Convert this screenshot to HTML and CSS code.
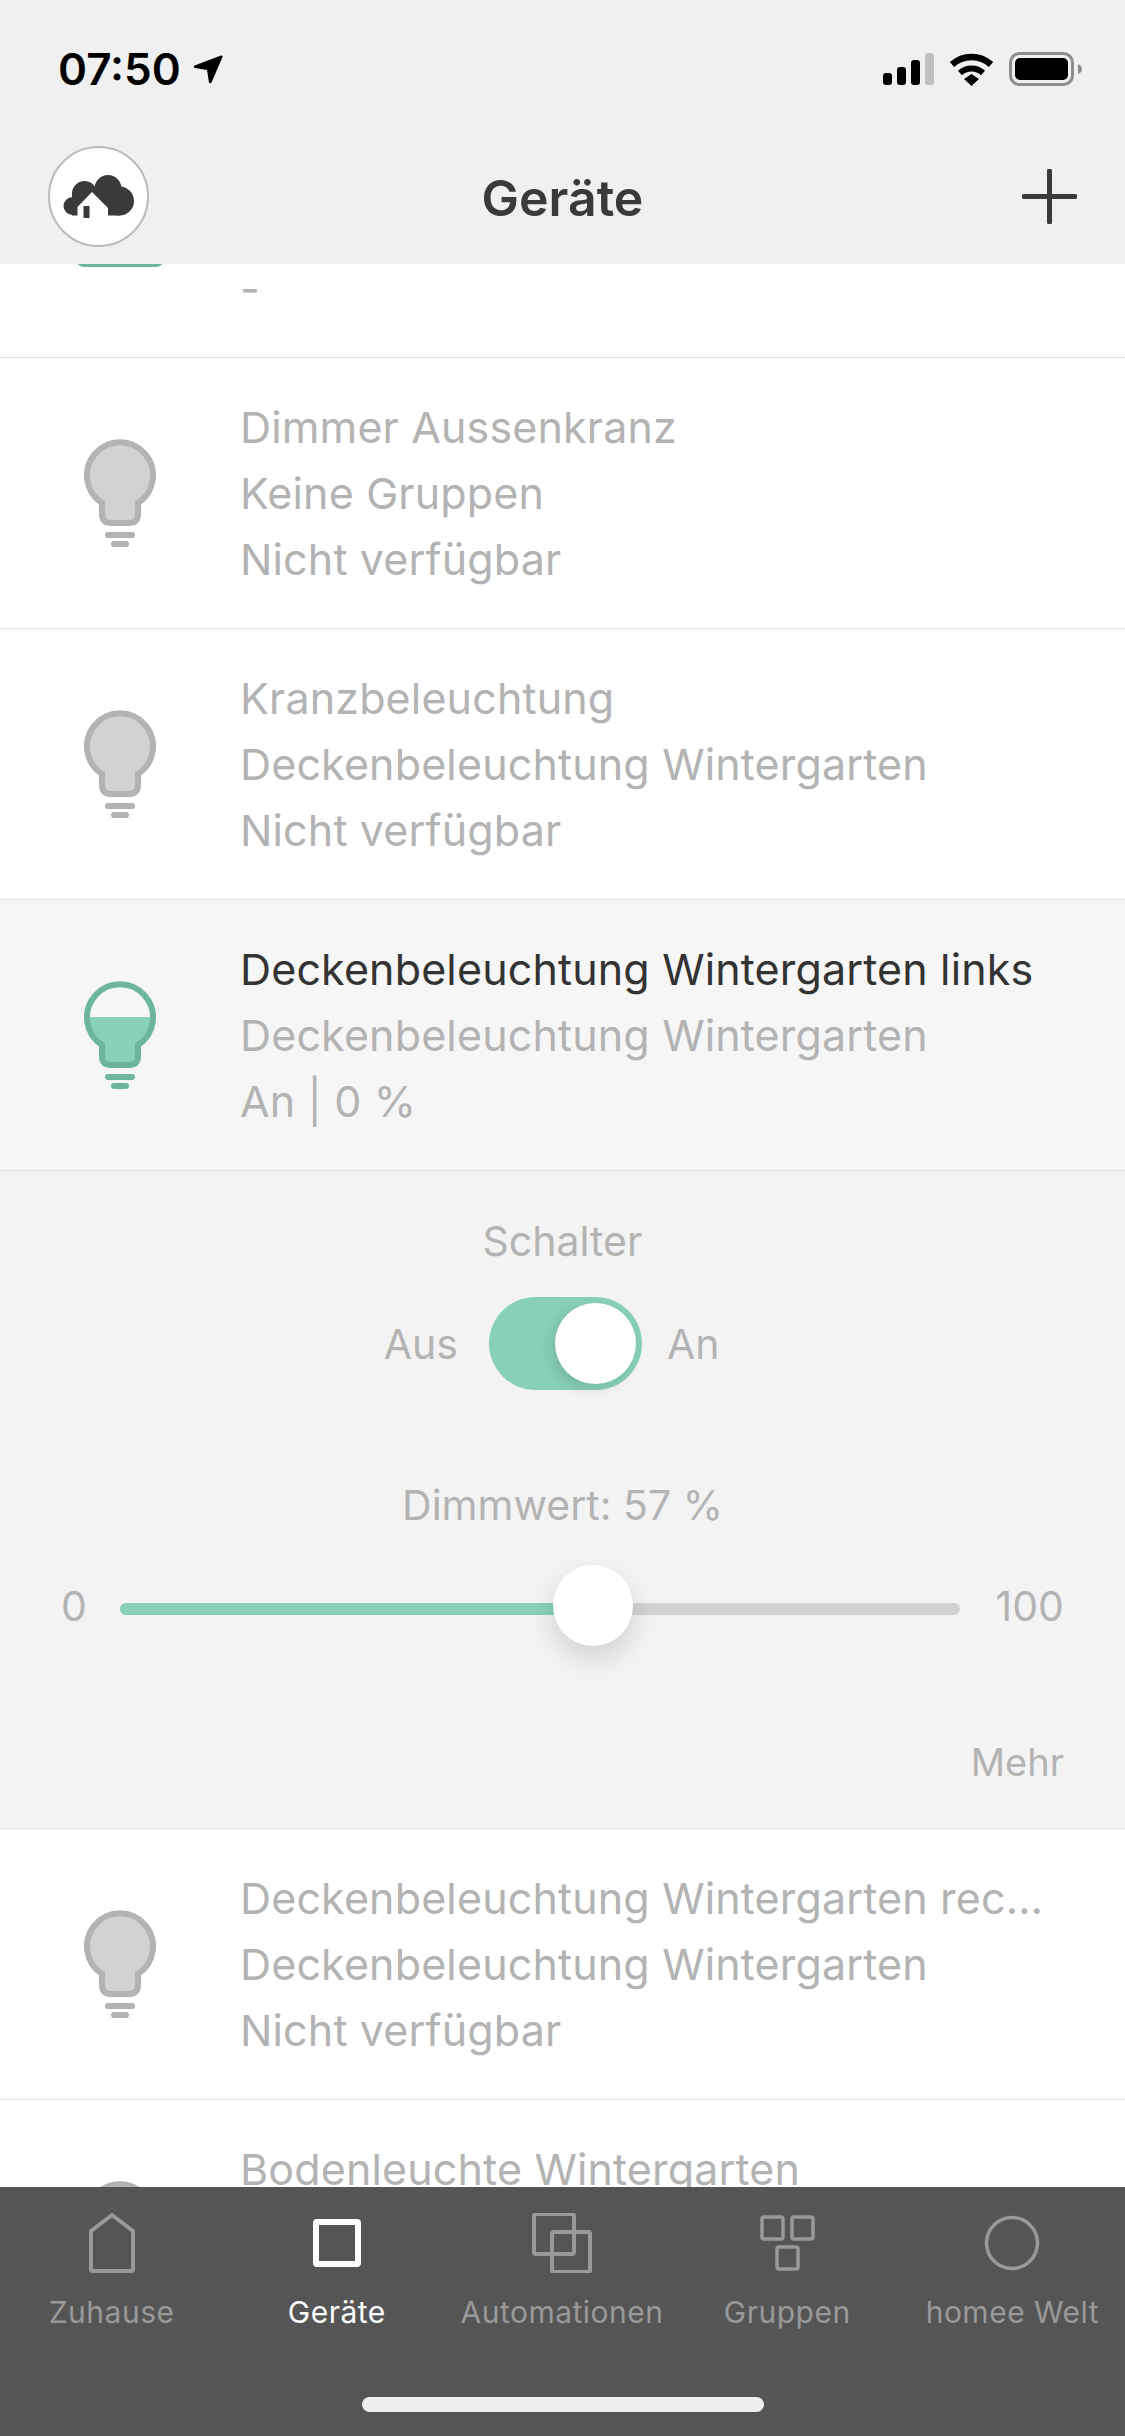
FILE: index.html
```html
<!DOCTYPE html>
<html lang="de">
<head>
    <meta charset="UTF-8">
    <meta name="viewport" content="width=device-width, initial-scale=1.0">
    <title>Geräte</title>
    <link rel="stylesheet" href="styles.css">
</head>
<body>
    <svg class="icon-defs" aria-hidden="true">
        <symbol id="bulb" viewBox="0 0 72 108">
            <path d="M18 64A33 33 0 1 1 54 64V75Q54 84 45 84H27Q18 84 18 75Z" fill="#d2d2d2" stroke="#b3b3b3" stroke-width="6"/>
            <rect x="21" y="93" width="30" height="6" rx="3" fill="#b3b3b3"/>
            <rect x="27" y="102" width="18" height="6" rx="3" fill="#b3b3b3"/>
        </symbol>
    </svg>

    <div class="app">
        <header class="top">
            <div class="status-bar">
                <div class="status-time">
                    <span>07:50</span>
                    <svg class="status-arrow" viewBox="0 0 30 30"><path d="M28 1.5L1.5 11.5Q0 13.5 2 14L14 16L16 28.500Q17 30 18.500 28.500L29.500 3Q30 1 28 1.500Z" fill="#000"/></svg>
                </div>
                <div class="status-icons">
                    <svg class="status-signal" viewBox="0 0 51 32">
                        <rect x="0" y="20" width="9" height="12" rx="3" fill="#000"/>
                        <rect x="14" y="14" width="9" height="18" rx="3" fill="#000"/>
                        <rect x="28" y="7" width="9" height="25" rx="3" fill="#000"/>
                        <rect x="42" y="0" width="9" height="32" rx="3" fill="#c0c0c0"/>
                    </svg>
                    <svg class="status-wifi" viewBox="0 0 45 33">
                        <path d="M3 11.500A29 29 0 0 1 42 11.500" fill="none" stroke="#000" stroke-width="6.500"/>
                        <path d="M11 20A17 17 0 0 1 34 20" fill="none" stroke="#000" stroke-width="6"/>
                        <path d="M15 26L22.500 21L30 26L22.500 33Z" fill="#000"/>
                    </svg>
                    <svg class="status-battery" viewBox="0 0 73 34">
                        <rect x="1.500" y="1.500" width="62" height="31" rx="9" fill="none" stroke="#8e8e8e" stroke-width="3"/>
                        <rect x="6" y="6" width="53" height="22" rx="5" fill="#000"/>
                        <path d="M69 12Q73 13.500 73 17Q73 20.500 69 22Z" fill="#8e8e8e"/>
                    </svg>
                </div>
            </div>
            <div class="nav-bar">
                <div class="nav-logo">
                    <svg class="nav-cloud" viewBox="0 0 72 44">
                        <g fill="#3a3a3a">
                            <circle cx="9.500" cy="31" r="9"/>
                            <circle cx="21.500" cy="18.500" r="12.500"/>
                            <circle cx="45" cy="13.500" r="13.500"/>
                            <circle cx="56.500" cy="26" r="14.500"/>
                            <rect x="9" y="18" width="48" height="22.500"/>
                        </g>
                        <path d="M29 17L14.500 32V44H45V33Z" fill="#fff"/>
                        <rect x="20.500" y="31" width="6" height="12" fill="#3a3a3a"/>
                    </svg>
                </div>
                <div class="nav-title">Geräte</div>
                <svg class="nav-plus" viewBox="0 0 55 55"><path d="M27.500 2V53M2 27.500H53" stroke="#3a3a3a" stroke-width="5" stroke-linecap="round"/></svg>
            </div>
        </header>

        <main class="content">
            <div class="device-list">
                <div class="device-row">
                    <div class="device-icon"><div class="device-bar"></div></div>
                    <div class="device-text">
                        <div class="device-line"></div>
                        <div class="device-line"></div>
                        <div class="device-line">-</div>
                    </div>
                </div>
                <div class="device-row">
                    <div class="device-icon"><svg class="bulb"><use href="#bulb"/></svg></div>
                    <div class="device-text">
                        <div class="device-line">Dimmer Aussenkranz</div>
                        <div class="device-line">Keine Gruppen</div>
                        <div class="device-line">Nicht verfügbar</div>
                    </div>
                </div>
                <div class="device-row">
                    <div class="device-icon"><svg class="bulb"><use href="#bulb"/></svg></div>
                    <div class="device-text">
                        <div class="device-line">Kranzbeleuchtung</div>
                        <div class="device-line">Deckenbeleuchtung Wintergarten</div>
                        <div class="device-line">Nicht verfügbar</div>
                    </div>
                </div>
                <div class="device-row device-row-active">
                    <div class="device-icon">
                        <svg class="bulb" viewBox="0 0 72 108">
                            <path d="M3 36H69A33 33 0 0 1 54 64V75Q54 84 45 84H27Q18 84 18 75V64A33 33 0 0 1 3 36Z" fill="#88d0ba"/>
                            <path d="M18 64A33 33 0 1 1 54 64V75Q54 84 45 84H27Q18 84 18 75Z" fill="none" stroke="#6eb5a0" stroke-width="6"/>
                            <rect x="21" y="93" width="30" height="6" rx="3" fill="#6eb5a0"/>
                            <rect x="27" y="102" width="18" height="6" rx="3" fill="#6eb5a0"/>
                        </svg>
                    </div>
                    <div class="device-text">
                        <div class="device-line device-name">Deckenbeleuchtung Wintergarten links</div>
                        <div class="device-line">Deckenbeleuchtung Wintergarten</div>
                        <div class="device-line">An | 0 %</div>
                    </div>
                </div>

                <div class="device-panel">
                    <div class="panel-label">Schalter</div>
                    <div class="switch-row">
                        <span class="switch-off">Aus</span>
                        <div class="switch"><div class="switch-knob"></div></div>
                        <span class="switch-on">An</span>
                    </div>
                    <div class="panel-label dim-label">Dimmwert: 57 %</div>
                    <div class="slider-row">
                        <span>0</span>
                        <div class="slider">
                            <div class="slider-rail"><div class="slider-fill"></div></div>
                            <div class="slider-thumb"></div>
                        </div>
                        <span class="slider-max">100</span>
                    </div>
                    <div class="panel-more">Mehr</div>
                </div>

                <div class="device-row">
                    <div class="device-icon"><svg class="bulb"><use href="#bulb"/></svg></div>
                    <div class="device-text">
                        <div class="device-line">Deckenbeleuchtung Wintergarten rechts</div>
                        <div class="device-line">Deckenbeleuchtung Wintergarten</div>
                        <div class="device-line">Nicht verfügbar</div>
                    </div>
                </div>
                <div class="device-row">
                    <div class="device-icon"><svg class="bulb"><use href="#bulb"/></svg></div>
                    <div class="device-text">
                        <div class="device-line">Bodenleuchte Wintergarten</div>
                        <div class="device-line"></div>
                        <div class="device-line"></div>
                    </div>
                </div>
            </div>
        </main>

        <nav class="tab-bar">
            <div class="tabs">
                <div class="tab">
                    <svg class="tab-icon" viewBox="0 0 60 60"><path d="M11 58H49Q51 58 51 56V18L30 2L9 18V56Q9 58 11 58Z" fill="none" stroke="#999" stroke-width="4" stroke-linejoin="round"/></svg>
                    <span>Zuhause</span>
                </div>
                <div class="tab tab-active">
                    <svg class="tab-icon" viewBox="0 0 60 60"><rect x="9" y="9" width="42" height="42" rx="1" fill="none" stroke="#fff" stroke-width="6"/></svg>
                    <span>Geräte</span>
                </div>
                <div class="tab">
                    <svg class="tab-icon" viewBox="0 0 60 60">
                        <rect x="2" y="1" width="40" height="40" rx="2" fill="none" stroke="#999" stroke-width="4"/>
                        <rect x="20" y="19" width="38" height="40" rx="2" fill="none" stroke="#999" stroke-width="4"/>
                    </svg>
                    <span>Automationen</span>
                </div>
                <div class="tab">
                    <svg class="tab-icon" viewBox="0 0 60 60">
                        <rect x="5" y="4" width="21" height="22" rx="2" fill="none" stroke="#999" stroke-width="3.500"/>
                        <rect x="35" y="4" width="21" height="22" rx="2" fill="none" stroke="#999" stroke-width="3.500"/>
                        <rect x="20" y="34" width="21" height="22" rx="2" fill="none" stroke="#999" stroke-width="3.500"/>
                    </svg>
                    <span>Gruppen</span>
                </div>
                <div class="tab">
                    <svg class="tab-icon" viewBox="0 0 60 60"><circle cx="30" cy="30" r="25.500" fill="none" stroke="#999" stroke-width="3.500"/></svg>
                    <span>homee Welt</span>
                </div>
            </div>
            <div class="home-indicator"></div>
        </nav>
    </div>
</body>
</html>
```

FILE: styles.css
```css
* {
    box-sizing: border-box;
}
body {
    margin: 0;
    font-family: Inter, "Noto Sans", sans-serif;
    background-color: #fff;
}
.icon-defs {
    display: none;
}
.app {
    width: 1125px;
    height: 2436px;
    display: flex;
    flex-direction: column;
    overflow: hidden;
}

/* header */
.top {
    height: 264px;
    flex: none;
    background-color: #f0f0f0;
    position: relative;
    z-index: 1;
}
.status-bar {
    height: 138px;
    display: flex;
    align-items: center;
    justify-content: space-between;
    padding: 0 43px 0 58px;
}
.status-time {
    display: flex;
    align-items: center;
    gap: 12px;
    font-size: 44px;
    font-weight: 600;
    color: #000;
}
.status-arrow {
    width: 30px;
    height: 30px;
}
.status-icons {
    display: flex;
    align-items: center;
    gap: 15px;
}
.status-signal {
    width: 51px;
    height: 32px;
}
.status-wifi {
    width: 45px;
    height: 33px;
}
.status-battery {
    width: 73px;
    height: 34px;
}
.nav-bar {
    height: 126px;
    display: grid;
    grid-template-columns: 1fr auto 1fr;
    align-items: center;
    padding: 0 48px 9px;
}
.nav-logo {
    width: 101px;
    height: 101px;
    border: 2px solid #bbb;
    border-radius: 50%;
    background-color: #fff;
    display: flex;
    align-items: center;
    justify-content: center;
}
.nav-cloud {
    width: 72px;
    height: 44px;
}
.nav-title {
    font-size: 50px;
    font-weight: 600;
    color: #3a3a3a;
    padding-top: 3px;
}
.nav-plus {
    width: 55px;
    height: 55px;
    justify-self: end;
}

/* list */
.content {
    flex: 1;
    min-height: 0;
    overflow: hidden;
}
.device-list {
    margin-top: -177px;
}
.device-row {
    height: 271px;
    display: flex;
    align-items: center;
    gap: 84px;
    padding: 0 77px 0 84px;
    border-bottom: 1px solid #e0e0e0;
    background-color: #fff;
}
.device-row-active {
    background-color: #f6f6f6;
}
.device-icon {
    width: 72px;
    flex: none;
    display: flex;
    justify-content: center;
}
.bulb {
    width: 72px;
    height: 108px;
    display: block;
}
.device-bar {
    width: 88px;
    height: 90px;
    flex: none;
    background-color: #6eb5a0;
    border-radius: 0 0 8px 8px;
}
.device-text {
    flex: 1;
    min-width: 0;
}
.device-line {
    height: 66px;
    line-height: 66px;
    font-size: 43px;
    letter-spacing: 0.15px;
    color: #b3b3b3;
    white-space: nowrap;
    overflow: hidden;
    text-overflow: ellipsis;
}
.device-name {
    color: #333;
}

/* expanded panel */
.device-panel {
    background-color: #f3f3f3;
    border-bottom: 1px solid #e0e0e0;
    padding: 40px 0 36px;
    font-size: 41px;
    color: #b3b3b3;
}
.panel-label {
    line-height: 60px;
    text-align: center;
}
.switch-row {
    margin-top: 26px;
    display: grid;
    grid-template-columns: 458px 184px 1fr;
    align-items: center;
}
.switch-off {
    text-align: right;
}
.switch-row .switch {
    margin-left: 31px;
}
.switch-on {
    padding-left: 25px;
}
.switch {
    width: 153px;
    height: 93px;
    border-radius: 47px;
    background-color: #88d0ba;
    padding: 6px;
    display: flex;
    justify-content: flex-end;
}
.switch-knob {
    width: 81px;
    height: 81px;
    border-radius: 50%;
    background-color: #fff;
    box-shadow: -4px 5px 14px rgba(0, 0, 0, 0.12);
}
.dim-label {
    margin-top: 85px;
}
.slider-row {
    margin-top: 30px;
    display: grid;
    grid-template-columns: 59px 840px 104px;
    align-items: center;
    padding: 0 61px;
}
.slider {
    height: 81px;
    position: relative;
    padding-top: 38px;
}
.slider-rail {
    height: 12px;
    border-radius: 6px;
    background-color: #d2d2d2;
    overflow: hidden;
}
.slider-fill {
    width: 57%;
    height: 100%;
    background-color: #88d0ba;
}
.slider-thumb {
    position: absolute;
    top: 0;
    left: calc((100% - 80px) * 0.57);
    width: 80px;
    height: 81px;
    border-radius: 50%;
    background-color: #fff;
    box-shadow: 0 12px 28px rgba(0, 0, 0, 0.14);
}
.slider-max {
    text-align: right;
}
.panel-more {
    margin-top: 86px;
    line-height: 60px;
    font-size: 38px;
    text-align: right;
    padding-right: 61px;
}

/* bottom tabs */
.tab-bar {
    height: 249px;
    flex: none;
    background-color: #555;
    position: relative;
    padding-top: 26px;
}
.tabs {
    display: grid;
    grid-template-columns: repeat(5, 1fr);
    margin-left: -1px;
}
.tab {
    display: flex;
    flex-direction: column;
    align-items: center;
    font-size: 30px;
    letter-spacing: 0.5px;
    line-height: 40px;
    color: #999;
}
.tab-active {
    color: #fff;
}
.tab-icon {
    width: 60px;
    height: 60px;
    margin-bottom: 19px;
}
.home-indicator {
    position: absolute;
    left: 362px;
    bottom: 24px;
    width: 402px;
    height: 15px;
    border-radius: 8px;
    background-color: #eee;
}
```
